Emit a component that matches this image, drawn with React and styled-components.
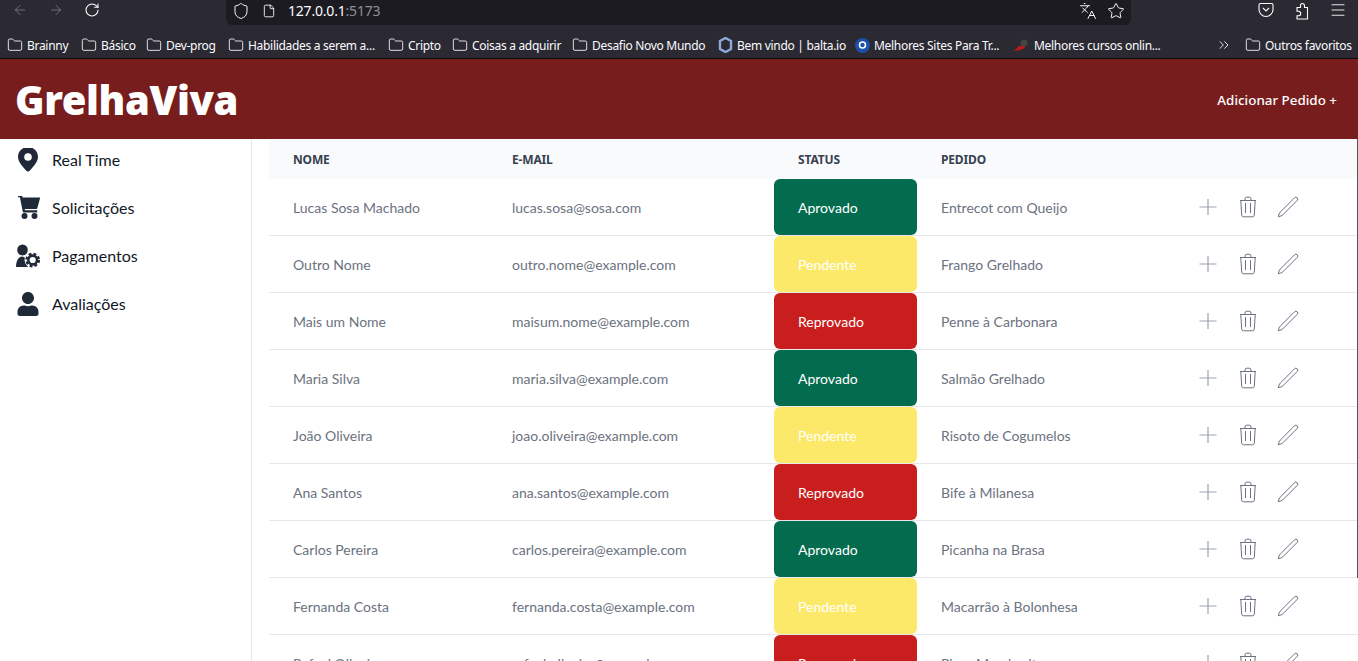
import React from "react";
import styled, { createGlobalStyle } from "styled-components";
import {
  ArrowLeft,
  ArrowRight,
  ChevronsRight,
  File,
  Folder,
  Languages,
  Menu,
  RotateCw,
  Shield,
  Star,
} from "lucide-react";
import { FaUser } from "react-icons/fa";

const GlobalStyle = createGlobalStyle`
  html, body {
    margin: 0;
    height: 100%;
    overflow: hidden;
    background: #fff;
    font-family: "Lato", sans-serif;
  }
`;

const bookmarks = [
  { label: "Brainny", width: 74 },
  { label: "Básico", width: 65 },
  { label: "Dev-prog", width: 82 },
  { label: "Habilidades a serem a...", width: 160 },
  { label: "Cripto", width: 64 },
  { label: "Coisas a adquirir", width: 120 },
  { label: "Desafio Novo Mundo", width: 146 },
  { label: "Bem vindo | balta.io", width: 137, icon: "balta" },
  { label: "Melhores Sites Para Tr...", width: 159, icon: "sites" },
  { label: "Melhores cursos onlin...", width: 202, icon: "cursos" },
];

const pedidos = [
  ["Lucas Sosa Machado", "lucas.sosa@sosa.com", "Aprovado", "Entrecot com Queijo"],
  ["Outro Nome", "outro.nome@example.com", "Pendente", "Frango Grelhado"],
  ["Mais um Nome", "maisum.nome@example.com", "Reprovado", "Penne à Carbonara"],
  ["Maria Silva", "maria.silva@example.com", "Aprovado", "Salmão Grelhado"],
  ["João Oliveira", "joao.oliveira@example.com", "Pendente", "Risoto de Cogumelos"],
  ["Ana Santos", "ana.santos@example.com", "Reprovado", "Bife à Milanesa"],
  ["Carlos Pereira", "carlos.pereira@example.com", "Aprovado", "Picanha na Brasa"],
  ["Fernanda Costa", "fernanda.costa@example.com", "Pendente", "Macarrão à Bolonhesa"],
  ["Rafael Oliveira", "rafael.oliveira@example.com", "Reprovado", "Pizza Margherita"],
];

const statusColors = {
  Aprovado: "#046c4e",
  Pendente: "#fce96a",
  Reprovado: "#c81e1e",
};

const Page = styled.div`
  height: 661px;
  overflow: hidden;
  display: flex;
  flex-direction: column;
  position: relative;
`;

const BrowserChrome = styled.div`
  height: 59px;
  box-sizing: border-box;
  flex-shrink: 0;
  background: #2b2a33;
  border-bottom: 1px solid #0c0c0d;
  display: flex;
  flex-direction: column;
  color: #fbfbfe;
  font-family: "Noto Sans", sans-serif;
`;

const TopRow = styled.div`
  height: 25px;
  display: flex;
  align-items: flex-start;
`;

const NavButtons = styled.div`
  width: 226px;
  height: 20px;
  padding-left: 12px;
  box-sizing: border-box;
  display: flex;
  align-items: center;
  gap: 20px;
`;

const NavIcon = styled.span`
  display: flex;
  width: 16px;
  color: ${(p) => (p.$muted ? "#7a797f" : "#fbfbfe")};
`;

const UrlBar = styled.div`
  width: 905px;
  height: 25px;
  background: #1c1b22;
  border-radius: 0 0 6px 6px;
  display: flex;
  align-items: center;
  padding: 0 6px 4px 6px;
  box-sizing: border-box;
  font-size: 14px;
  letter-spacing: -0.2px;
`;

const UrlText = styled.span`
  margin-left: 12px;
  flex: 1;
  span {
    color: #8f8f96;
  }
`;

const UrlIcons = styled.div`
  display: flex;
  gap: 10px;
`;

const ToolIcons = styled.div`
  display: flex;
  gap: 18px;
  margin-left: 126px;
  padding-top: 1px;
`;

const BookmarkRow = styled.div`
  flex: 1;
  display: flex;
  align-items: center;
  padding: 7px 0 0 7px;
  font-size: 12px;
  letter-spacing: -0.3px;
`;

const Bookmark = styled.div`
  width: ${(p) => p.$width}px;
  display: flex;
  align-items: center;
  gap: 4px;
  white-space: nowrap;
  flex-shrink: 0;
  svg {
    flex-shrink: 0;
  }
`;

const Header = styled.header`
  height: 80px;
  flex-shrink: 0;
  background: #771d1d;
  display: flex;
  align-items: center;
  justify-content: space-between;
  padding: 0 21px 0 15px;
  color: #fff;
`;

const Logo = styled.h1`
  margin: 0;
  font-family: "Noto Sans", sans-serif;
  font-size: 40px;
  font-weight: 900;
  letter-spacing: -0.4px;
`;

const AddButton = styled.button`
  background: none;
  border: 0;
  padding: 2px 0 0;
  color: #fff;
  font-family: "Noto Sans", sans-serif;
  font-size: 13.4px;
  font-weight: 500;
`;

const Body = styled.div`
  flex: 1;
  display: flex;
  min-height: 0;
`;

const Sidebar = styled.nav`
  width: 252px;
  flex-shrink: 0;
  box-sizing: border-box;
  border-right: 1px solid #e5e7eb;
  padding: 9px 0 0 16px;
  display: flex;
  flex-direction: column;
  gap: 24px;
`;

const NavItem = styled.a`
  height: 24px;
  display: flex;
  align-items: center;
  gap: 12px;
  color: #111827;
  font-size: 16px;
  svg {
    width: 24px;
    height: 24px;
    color: #1f2937;
    flex-shrink: 0;
  }
`;

const NavLabel = styled.span`
  margin-top: -2px;
`;

const TableArea = styled.main`
  flex: 1;
  margin-left: 17px;
  min-width: 0;
`;

const Row = styled.div`
  display: grid;
  grid-template-columns: 219px 286px 143px 258px 1fr;
  height: ${(p) => (p.$head ? "40px" : "57px")};
  box-sizing: border-box;
  background: ${(p) => (p.$head ? "#f9fafb" : "#fff")};
  border-bottom: ${(p) => (p.$head ? "0" : "1px solid #e5e7eb")};
`;

const HeadCell = styled.div`
  padding-left: 24px;
  display: flex;
  align-items: center;
  color: #374151;
  font-family: "Noto Sans", sans-serif;
  font-size: 12px;
  font-weight: 700;
  letter-spacing: -0.15px;
  text-transform: uppercase;
`;

const Cell = styled.div`
  padding-left: 24px;
  display: flex;
  align-items: center;
  color: #6b7280;
  font-size: 14px;
  white-space: nowrap;
`;

const StatusCell = styled(Cell)`
  background: ${(p) => statusColors[p.$status]};
  color: #fff;
  border-radius: 6px;
`;

const Actions = styled.div`
  padding-left: 21px;
  display: flex;
  align-items: center;
  gap: 16px;
  color: #6b7280;
`;

const EdgeLine = styled.div`
  position: absolute;
  top: 139px;
  right: 0;
  width: 1px;
  height: 439px;
  background: #55555b;
`;

const PlusIcon = () => (
  <svg width="24" height="24" viewBox="0 0 24 24" fill="none" stroke="#9ca3af" strokeWidth="1.2">
    <path d="M12 4v16M3.5 12h17" />
  </svg>
);

const TrashIcon = () => (
  <svg width="24" height="24" viewBox="0 0 24 24" fill="none" stroke="currentColor" strokeWidth="1">
    <path d="M4 5.5h16M9 5.5V4a1.8 1.8 0 0 1 1.8-1.8h2.4A1.8 1.8 0 0 1 15 4v1.5" />
    <path d="M4.8 5.5l.9 14.6a1.8 1.8 0 0 0 1.8 1.7h9a1.8 1.8 0 0 0 1.8-1.7l.9-14.6" />
    <path d="M9.5 8v10M14.5 8v10" />
  </svg>
);

const PencilIcon = () => (
  <svg width="24" height="24" viewBox="0 0 24 24" fill="none" stroke="currentColor" strokeWidth="1">
    <path d="M16.862 4.487l1.687-1.688a1.875 1.875 0 112.652 2.652L6.832 19.82a4.5 4.5 0 01-1.897 1.13l-2.685.8.8-2.685a4.5 4.5 0 011.13-1.897L16.863 4.487z" />
  </svg>
);

const MarkerIcon = () => (
  <svg viewBox="0 0 24 24" fill="currentColor">
    <path
      fillRule="evenodd"
      d="M12 -1C6.4 -1 2 3.4 2 8.9c0 5.4 6.6 11.8 9 14.3.6.5 1.4.5 2 0 2.4-2.5 9-8.9 9-14.3C22 3.4 17.6 -1 12 -1zm0 6.2a3.8 3.8 0 1 1 0 7.6 3.8 3.8 0 0 1 0-7.6z"
    />
  </svg>
);

const CartIcon = () => (
  <svg viewBox="0 0 24 24" fill="currentColor">
    <path d="M2 -1h3.2c.5 0 .9.3 1 .8L6.6 1.5H23.500c.4 0 .6.3.5.7l-2.700 10c-.1.4-.5.7-.9.7H8.700l.3 1.4h12.200v2.200H7.800c-.5 0-.9-.3-1-.8L3.900 1.200H2z" />
    <circle cx="8.5" cy="20" r="3" />
    <circle cx="18.5" cy="20" r="3" />
  </svg>
);

const UserGearIcon = () => (
  <svg viewBox="0 0 24 24" fill="currentColor">
    <ellipse cx="6.5" cy="6" rx="5.3" ry="5.5" />
    <path d="M0 23c0-6.500 3-10.500 6-10.500s6 4 6 10.500z" />
    <circle cx="16.7" cy="16" r="8.2" fill="#fff" />
    <circle cx="16.7" cy="16" r="4.4" fill="none" stroke="currentColor" strokeWidth="2.6" />
    <circle cx="16.7" cy="16" r="6.3" fill="none" stroke="currentColor" strokeWidth="2.2" strokeDasharray="2.9 2.05" />
  </svg>
);

const PocketIcon = () => (
  <svg width="18" height="18" viewBox="0 0 18 18" fill="none" stroke="#fbfbfe" strokeWidth="1.1">
    <path d="M3.5 2.500h11A1.500 1.500 0 0 1 16 4v4.500a7 7 0 0 1-14 0V4a1.500 1.500 0 0 1 1.500-1.500z" />
    <path d="M6 7l3 3 3-3" />
  </svg>
);

const ExtensionIcon = () => (
  <svg width="18" height="20" viewBox="0 0 18 20" fill="none" stroke="#fbfbfe" strokeWidth="1.1">
    <path d="M9 2.500c1.500 0 2.500 1 2.500 2.300V6.500h3v11.500H4v-3.200h1.400c1.300 0 2.300-1 2.300-2.300S6.700 10.200 5.400 10.200H4V6.500h3.500V4.800C7.500 3.500 7.700 2.500 9 2.500z" />
  </svg>
);

const FavIcon = ({ type }) => {
  if (type === "balta") {
    return (
      <svg width="15" height="16" viewBox="0 0 15 16" fill="none">
        <path d="M7.5 1l5.500 3v8L7.500 15l-5.500-3V4z" stroke="#8fa8d8" strokeWidth="2.4" />
      </svg>
    );
  }
  if (type === "sites") {
    return (
      <svg width="15" height="15" viewBox="0 0 15 15" fill="none">
        <circle cx="7.5" cy="7.5" r="7.5" fill="#1d50a8" />
        <circle cx="7.5" cy="7" r="3" stroke="#fff" strokeWidth="1.6" />
      </svg>
    );
  }
  return (
    <svg width="16" height="15" viewBox="0 0 16 15">
      <path d="M0 13l5-5 5-1 1 3-5 2z" fill="#c01818" />
      <circle cx="10" cy="5" r="3.5" fill="#444" />
    </svg>
  );
};

const App = () => {
  return (
    <Page>
      <GlobalStyle />
      <BrowserChrome>
        <TopRow>
          <NavButtons>
            <NavIcon $muted><ArrowLeft size={16} strokeWidth={1.3} /></NavIcon>
            <NavIcon $muted><ArrowRight size={16} strokeWidth={1.3} /></NavIcon>
            <NavIcon><RotateCw size={16} strokeWidth={1.6} /></NavIcon>
          </NavButtons>
          <UrlBar>
            <Shield size={18} strokeWidth={1.3} />
            <File size={14} strokeWidth={1.5} style={{ marginLeft: 12 }} />
            <UrlText>127.0.0.1<span>:5173</span></UrlText>
            <UrlIcons>
              <Languages size={18} strokeWidth={1.3} />
              <Star size={18} strokeWidth={1.3} />
            </UrlIcons>
          </UrlBar>
          <ToolIcons>
            <PocketIcon />
            <ExtensionIcon />
            <Menu size={18} strokeWidth={1.2} />
          </ToolIcons>
        </TopRow>
        <BookmarkRow>
          {bookmarks.map((b) => (
            <Bookmark key={b.label} $width={b.width}>
              {b.icon ? <FavIcon type={b.icon} /> : <Folder size={16} strokeWidth={1.3} />}
              {b.label}
            </Bookmark>
          ))}
          <Bookmark $width={29}><ChevronsRight size={16} strokeWidth={1.3} /></Bookmark>
          <Bookmark $width={110}><Folder size={16} strokeWidth={1.3} />Outros favoritos</Bookmark>
        </BookmarkRow>
      </BrowserChrome>

      <Header>
        <Logo>GrelhaViva</Logo>
        <AddButton>Adicionar Pedido +</AddButton>
      </Header>

      <Body>
        <Sidebar>
          <NavItem><MarkerIcon /><NavLabel>Real Time</NavLabel></NavItem>
          <NavItem><CartIcon /><NavLabel>Solicitações</NavLabel></NavItem>
          <NavItem><UserGearIcon /><NavLabel>Pagamentos</NavLabel></NavItem>
          <NavItem><FaUser /><NavLabel>Avaliações</NavLabel></NavItem>
        </Sidebar>
        <TableArea>
          <Row $head>
            <HeadCell>Nome</HeadCell>
            <HeadCell>E-mail</HeadCell>
            <HeadCell>Status</HeadCell>
            <HeadCell>Pedido</HeadCell>
            <HeadCell />
          </Row>
          {pedidos.map(([nome, email, status, pedido]) => (
            <Row key={email}>
              <Cell>{nome}</Cell>
              <Cell>{email}</Cell>
              <StatusCell $status={status}>{status}</StatusCell>
              <Cell>{pedido}</Cell>
              <Actions>
                <PlusIcon />
                <TrashIcon />
                <PencilIcon />
              </Actions>
            </Row>
          ))}
        </TableArea>
      </Body>
      <EdgeLine />
    </Page>
  );
};

export default App;
